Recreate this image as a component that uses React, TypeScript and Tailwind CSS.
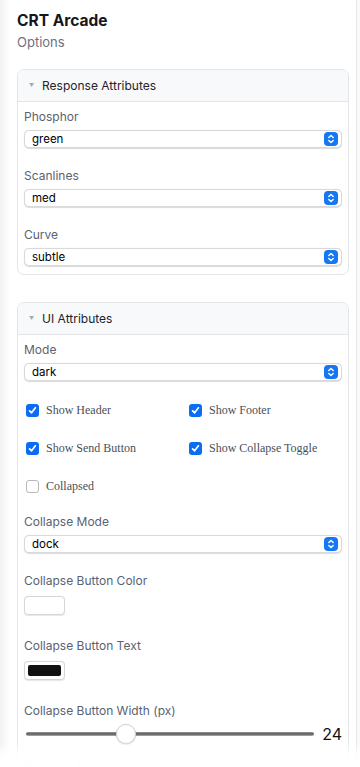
import { useState } from "react"

const sans = "font-['Inter','Liberation_Sans',sans-serif]"
const serif = "font-['Liberation_Serif','Times_New_Roman',serif]"

function Stepper() {
    return (
        <span className="pointer-events-none absolute right-[4px] top-1/2 flex h-[14px] w-[14px] -translate-y-1/2 items-center justify-center rounded-[4px] bg-[#1677f2]">
            <svg width="8" height="10" viewBox="0 0 8 10" fill="none" stroke="white" strokeWidth="1.4" strokeLinecap="round" strokeLinejoin="round">
                <path d="M1.8 3.6 4 1.6 6.2 3.6" />
                <path d="M1.8 6.4 4 8.4 6.2 6.4" />
            </svg>
        </span>
    )
}

function FieldLabel({ children }: Readonly<{ children: React.ReactNode }>) {
    return <label className="block h-[20px] text-[12px] leading-[20px] text-[#5b6270]">{children}</label>
}

function SelectField({ label, value, options }: Readonly<{ label: string; value: string; options: string[] }>) {
    const [v, setV] = useState(value)
    return (
        <div className="flex flex-col">
            <FieldLabel>{label}</FieldLabel>
            <div className="relative mt-[3px]">
                <select
                    value={v}
                    onChange={e => setV(e.target.value)}
                    className="block h-[18px] w-full appearance-none rounded-[5px] border border-[#d9d9d9] bg-white pl-[7px] text-[11.5px] leading-[16px] text-black shadow-[0_0.5px_1px_rgba(0,0,0,0.15)] outline-none">
                    {options.map(o => (
                        <option key={o} value={o}>
                            {o}
                        </option>
                    ))}
                </select>
                <Stepper />
            </div>
        </div>
    )
}

function Check({ label, checked }: Readonly<{ label: string; checked: boolean }>) {
    return (
        <div className="flex h-[20px] items-center">
            {checked ? (
                <span className="ml-[2px] flex h-[13px] w-[13px] items-center justify-center rounded-[3px] bg-[#0b6cf4]">
                    <svg width="9" height="9" viewBox="0 0 9 9" fill="none" stroke="white" strokeWidth="1.7" strokeLinecap="round" strokeLinejoin="round">
                        <path d="M1.6 4.8 3.6 6.8 7.4 1.8" />
                    </svg>
                </span>
            ) : (
                <span className="ml-[2px] h-[13px] w-[13px] rounded-[3px] border border-[#b8b8b8] bg-white" />
            )}
            <span className={`${serif} ml-[7px] text-[12px] text-[#4a4f59]`}>{label}</span>
        </div>
    )
}

function Swatch({ color }: Readonly<{ color: string }>) {
    return (
        <div className="mt-[5px] flex h-[19px] w-[41px] items-center justify-center rounded-[4px] border border-[#d6d6d6] bg-white shadow-[0_0.5px_1px_rgba(0,0,0,0.1)]">
            <span className="h-[11px] w-[33px] rounded-[2px]" style={{ backgroundColor: color }} />
        </div>
    )
}

function Card({ title, children }: Readonly<{ title: string; children: React.ReactNode }>) {
    return (
        <section className="overflow-hidden rounded-[7px] border border-[#e3e5e8] bg-white">
            <header className="flex h-[32px] items-center border-b border-[#e3e5e8] bg-[#f8f9fb] pl-[11px]">
                <span className="text-[5px] text-[#a3a8b0]">▼</span>
                <span className="ml-[8px] text-[12px] text-[#1f2329]">{title}</span>
            </header>
            <div className="px-[6px]">{children}</div>
        </section>
    )
}

export default function App() {
    return (
        <div className={`${sans} relative flex h-[767px] w-[360px] overflow-hidden bg-white`}>
            <div className="w-[10px] bg-gradient-to-r from-[#f1f1f1] to-white" />
            <main className="w-[346px] px-[7px]">
                <h1 className="pt-[9px] text-[15.5px] font-bold leading-[24px] text-[#15171a]">CRT Arcade</h1>
                <p className="text-[13px] leading-[18px] text-[#6b7280]">Options</p>

                <div className="mt-[18px]">
                    <Card title="Response Attributes">
                        <div className="flex flex-col gap-[18px] pb-[8px] pt-[5px]">
                            <SelectField label="Phosphor" value="green" options={["green", "amber", "white"]} />
                            <SelectField label="Scanlines" value="med" options={["off", "low", "med", "high"]} />
                            <SelectField label="Curve" value="subtle" options={["flat", "subtle", "strong"]} />
                        </div>
                    </Card>
                </div>

                <div className="mt-[27px]">
                    <Card title="UI Attributes">
                        <div className="pt-[5px]">
                            <SelectField label="Mode" value="dark" options={["light", "dark"]} />
                            <div className="mt-[19px] grid grid-cols-2 gap-y-[18px]">
                                <Check label="Show Header" checked />
                                <div className="pl-[4px]">
                                    <Check label="Show Footer" checked />
                                </div>
                                <Check label="Show Send Button" checked />
                                <div className="pl-[4px]">
                                    <Check label="Show Collapse Toggle" checked />
                                </div>
                                <Check label="Collapsed" checked={false} />
                            </div>
                            <div className="mt-[16px]">
                                <SelectField label="Collapse Mode" value="dock" options={["dock", "float"]} />
                            </div>
                            <div className="mt-[18px]">
                                <FieldLabel>Collapse Button Color</FieldLabel>
                                <Swatch color="#ffffff" />
                            </div>
                            <div className="mt-[21px]">
                                <FieldLabel>Collapse Button Text</FieldLabel>
                                <Swatch color="#111111" />
                            </div>
                            <div className="mt-[21px]">
                                <FieldLabel>Collapse Button Width (px)</FieldLabel>
                                <div className="mt-[3px] flex items-center">
                                    <div className="relative ml-[2px] h-[20px] w-[292px]">
                                        <div className="absolute left-0 right-0 top-[8px] h-[4px] rounded-full bg-gradient-to-b from-[#9a9a9a] via-[#5a5a5a] to-[#b5b5b5]" />
                                        <div className="absolute left-[90px] top-0 h-[20px] w-[20px] rounded-full border border-[#d4d4d4] bg-white shadow-[0_0.5px_1.5px_rgba(0,0,0,0.2)]" />
                                    </div>
                                    <span className="ml-[8px] text-[16px] leading-[20px] text-[#111]">24</span>
                                </div>
                            </div>
                            <div className="mt-[15px]">
                                <FieldLabel>Collapse Button Height (px)</FieldLabel>
                            </div>
                        </div>
                    </Card>
                </div>
            </main>
            <div className="w-[4px] border-l border-[#e6e6e6] bg-[#fafafa]" />
            <div className="pointer-events-none absolute bottom-0 left-0 right-0 h-[26px] bg-gradient-to-b from-white/0 via-white/85 to-white" />
        </div>
    )
}
